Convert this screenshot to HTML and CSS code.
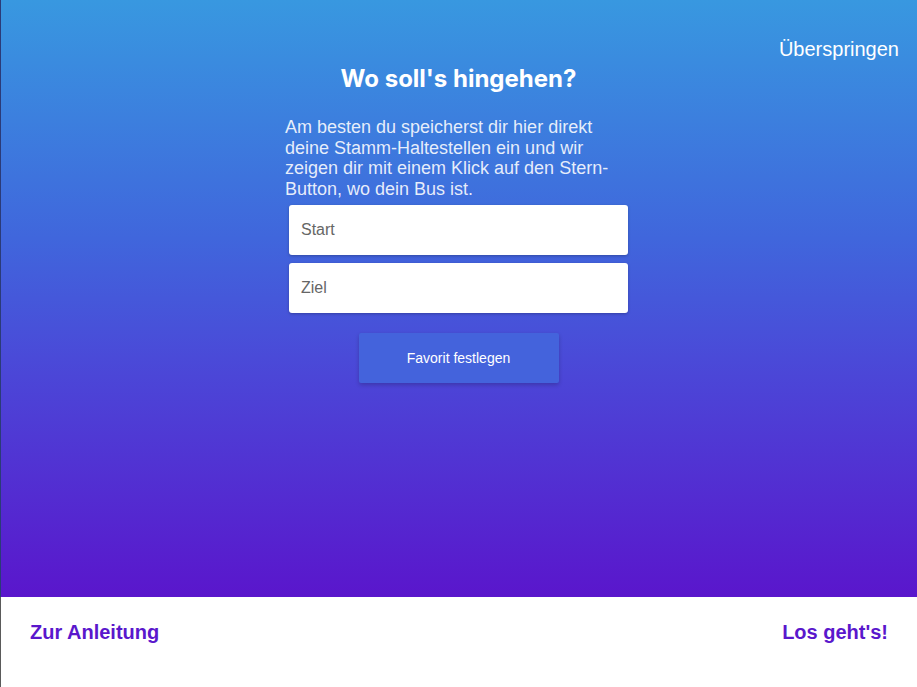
FILE: index.html
```html
<!DOCTYPE html>
<html lang="de">
<head>
<meta charset="utf-8">
<title>Wo soll's hingehen?</title>
<link rel="stylesheet" href="styles.css">
</head>
<body>
<div class="app">
  <main class="screen">
    <div class="topbar">
      <a class="skip" href="#">Überspringen</a>
    </div>
    <div class="column">
      <h1 class="title">Wo soll's hingehen?</h1>
      <p class="intro">Am besten du speicherst dir hier direkt deine Stamm-Haltestellen ein und wir zeigen dir mit einem Klick auf den Stern-Button, wo dein Bus ist.</p>
      <input class="field" type="text" placeholder="Start">
      <input class="field" type="text" placeholder="Ziel">
      <button class="fav" type="button">Favorit festlegen</button>
    </div>
  </main>
  <footer class="footer">
    <a class="foot-link" href="#">Zur Anleitung</a>
    <a class="foot-link" href="#">Los geht's!</a>
  </footer>
</div>
</body>
</html>
```
FILE: styles.css
```css
html, body {
  margin: 0;
  padding: 0;
  height: 100%;
}
body {
  font-family: "Liberation Sans", Arial, sans-serif;
  background: #fff;
}
.app {
  height: 687px;
  display: flex;
  flex-direction: column;
}
.screen {
  height: 597px;
  background: linear-gradient(180deg, #3898e0 0%, #4066dc 40%, #4a4ad8 60%, #5a16cc 100%);
  display: flex;
  flex-direction: column;
  box-shadow: inset 1px 0 0 #2b3b78;
}
.topbar {
  display: flex;
  justify-content: flex-end;
  padding: 36px 18px 0 0;
  height: 26px;
}
.skip {
  color: #fff;
  font-size: 20px;
  text-decoration: none;
  line-height: 26px;
}
.column {
  width: 339px;
  margin: 0 auto;
  display: flex;
  flex-direction: column;
  align-items: center;
}
.title {
  margin: 2px 0 0 0;
  font-family: Inter, "Noto Sans", sans-serif;
  font-weight: 700;
  font-size: 24px;
  line-height: 30px;
  color: #fff;
}
.intro {
  align-self: stretch;
  margin: 23px 0 0 -4px;
  width: 340px;
  font-size: 18px;
  line-height: 20.7px;
  color: rgba(255, 255, 255, 0.88);
}
.field {
  align-self: stretch;
  height: 50px;
  box-sizing: border-box;
  border: none;
  border-radius: 3px;
  background: #fff;
  padding: 0 12px;
  font-family: "Liberation Sans", Arial, sans-serif;
  font-size: 16px;
  color: #333;
  box-shadow: 0 1px 3px rgba(0, 0, 0, 0.25);
  outline: none;
}
.field::placeholder {
  color: #666;
}
.field:first-of-type {
  margin-top: 5px;
}
.field + .field {
  margin-top: 8px;
}
.fav {
  margin-top: 20px;
  width: 200px;
  height: 50px;
  border: none;
  border-radius: 2px;
  background: #4463dc;
  color: #fff;
  font-family: "Liberation Sans", Arial, sans-serif;
  font-size: 14px;
  box-shadow: 0 2px 4px rgba(0, 0, 0, 0.2);
  cursor: pointer;
}
.footer {
  flex: 1;
  display: flex;
  justify-content: space-between;
  align-items: center;
  padding: 0 29px 19px 30px;
  background: #fff;
  box-shadow: inset 1px 0 0 #5a5a5a;
}
.foot-link {
  color: #5a17cc;
  font-size: 20px;
  font-weight: 700;
  text-decoration: none;
}
```
